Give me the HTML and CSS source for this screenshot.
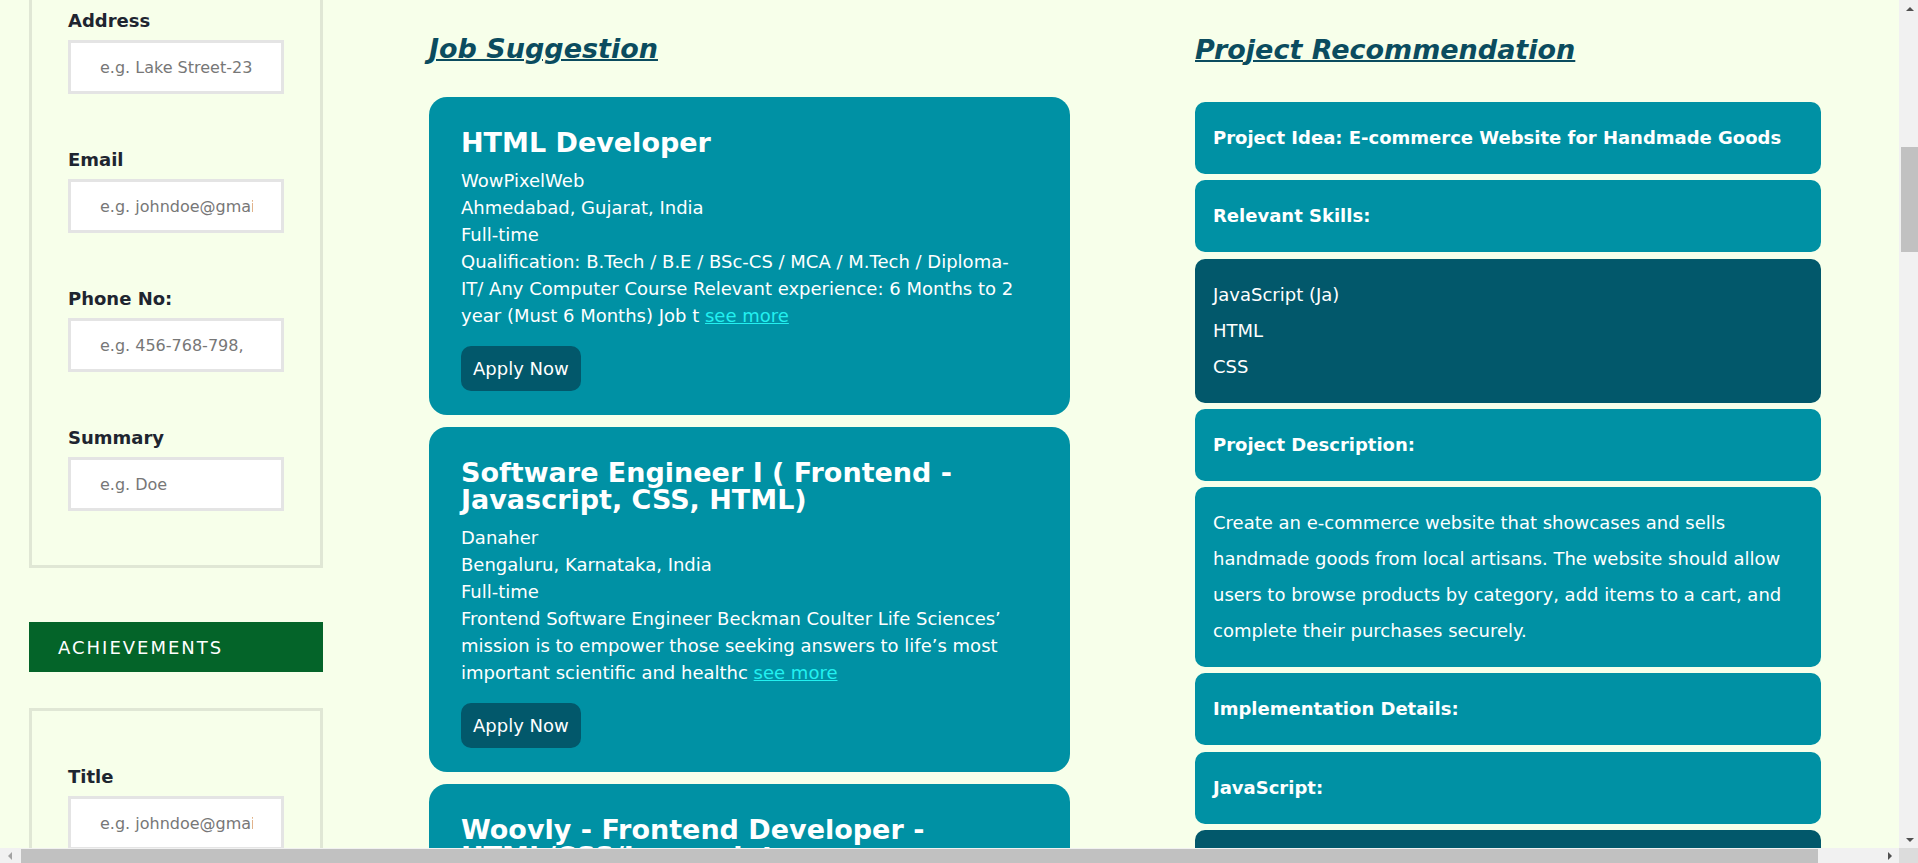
FILE: index.html
```html
<!DOCTYPE html>
<html lang="en">
<head>
<meta charset="utf-8">
<title>Resume Builder</title>
<link rel="stylesheet" href="styles.css">
</head>
<body>
<div class="page">
  <aside class="sidebar">
    <form class="form-box form-box--continued">
      <div class="field">
        <label class="field-label" for="address">Address</label>
        <input class="field-input" id="address" type="text" placeholder="e.g. Lake Street-23">
      </div>
      <div class="field">
        <label class="field-label" for="email">Email</label>
        <input class="field-input" id="email" type="text" placeholder="e.g. johndoe@gmail.com">
      </div>
      <div class="field">
        <label class="field-label" for="phone">Phone No:</label>
        <input class="field-input" id="phone" type="text" placeholder="e.g. 456-768-798,">
      </div>
      <div class="field">
        <label class="field-label" for="summary">Summary</label>
        <input class="field-input" id="summary" type="text" placeholder="e.g. Doe">
      </div>
    </form>
    <div class="section-head">ACHIEVEMENTS</div>
    <form class="form-box form-box--achieve">
      <div class="field">
        <label class="field-label" for="ach-title">Title</label>
        <input class="field-input" id="ach-title" type="text" placeholder="e.g. johndoe@gmail.com">
      </div>
    </form>
  </aside>

  <main class="jobs">
    <h2 class="col-title">Job Suggestion</h2>

    <article class="job-card">
      <h3 class="job-title">HTML Developer</h3>
      <p class="job-line">WowPixelWeb</p>
      <p class="job-line">Ahmedabad, Gujarat, India</p>
      <p class="job-line">Full-time</p>
      <p class="job-line">Qualification: B.Tech / B.E / BSc-CS / MCA / M.Tech / Diploma-IT/ Any Computer Course Relevant experience: 6 Months to 2 year (Must 6 Months) Job t <a class="see-more" href="#">see more</a></p>
      <button class="apply-btn" type="button">Apply Now</button>
    </article>

    <article class="job-card">
      <h3 class="job-title">Software Engineer I ( Frontend - Javascript, CSS, HTML)</h3>
      <p class="job-line">Danaher</p>
      <p class="job-line">Bengaluru, Karnataka, India</p>
      <p class="job-line">Full-time</p>
      <p class="job-line">Frontend Software Engineer Beckman Coulter Life Sciences’ mission is to empower those seeking answers to life’s most important scientific and healthc <a class="see-more" href="#">see more</a></p>
      <button class="apply-btn" type="button">Apply Now</button>
    </article>

    <article class="job-card">
      <h3 class="job-title">Woovly - Frontend Developer - HTML/CSS/Javascript</h3>
      <button class="apply-btn" type="button">Apply Now</button>
    </article>
  </main>

  <section class="projects">
    <h2 class="col-title col-title--projects">Project Recommendation</h2>
    <div class="p-block p-block--head">Project Idea: E-commerce Website for Handmade Goods</div>
    <div class="p-block p-block--head">Relevant Skills:</div>
    <ul class="p-block p-block--dark p-list">
      <li>JavaScript (Ja)</li>
      <li>HTML</li>
      <li>CSS</li>
    </ul>
    <div class="p-block p-block--head">Project Description:</div>
    <div class="p-block">Create an e-commerce website that showcases and sells handmade goods from local artisans. The website should allow users to browse products by category, add items to a cart, and complete their purchases securely.</div>
    <div class="p-block p-block--head">Implementation Details:</div>
    <div class="p-block p-block--head">JavaScript:</div>
    <div class="p-block p-block--dark p-block--tall"></div>
  </section>
</div>

<div class="sb sb-v" aria-hidden="true">
  <span class="sb-btn"><span class="tri tri-up"></span></span>
  <span class="sb-track-v"><span class="sb-thumb-v"></span></span>
  <span class="sb-btn"><span class="tri tri-down"></span></span>
</div>
<div class="sb sb-h" aria-hidden="true">
  <span class="sb-btn-h"><span class="tri tri-left"></span></span>
  <span class="sb-track-h"><span class="sb-thumb-h"></span></span>
  <span class="sb-btn-h"><span class="tri tri-right"></span></span>
</div>
<div class="sb-corner" aria-hidden="true"></div>
</body>
</html>
```

FILE: styles.css
```css
* {
  box-sizing: border-box;
}

html,
body {
  margin: 0;
  padding: 0;
}

body {
  background: #f7ffea;
  font-family: "DejaVu Sans", Verdana, sans-serif;
  color: #1e2530;
}

.page {
  display: flex;
  align-items: flex-start;
  width: 1970px;
}

/* ---------- left sidebar ---------- */
.sidebar {
  flex: none;
  width: 294px;
  margin-left: 29px;
}

.form-box {
  display: flex;
  flex-direction: column;
  gap: 55px;
  margin: 0;
  border: 3px solid #e0e7d5;
  padding: 55px 36px 54px;
}

.form-box--continued {
  border-top: 0;
  padding-top: 10px;
}

.form-box--achieve {
  margin-top: 36px;
}

.field {
  display: flex;
  flex-direction: column;
}

.field-label {
  margin-bottom: 9px;
  font-size: 18px;
  font-weight: bold;
  line-height: 21px;
  color: #1e2530;
}

.field-input {
  width: 216px;
  height: 54px;
  margin: 0;
  border: 3px solid #e4e4e4;
  border-radius: 0;
  padding: 0 28px 0 29px;
  background: #fff;
  font: 16px "DejaVu Sans", Verdana, sans-serif;
  color: #333;
  outline: none;
}

.field-input::placeholder {
  color: #777;
  opacity: 1;
}

.section-head {
  margin-top: 54px;
  height: 50px;
  padding: 14.5px 29px;
  background: #046429;
  color: #fff;
  font-size: 18px;
  line-height: 21px;
  letter-spacing: 2px;
}

/* ---------- column titles ---------- */
.col-title {
  margin: 0 0 32px;
  font-size: 27px;
  line-height: 32px;
  font-weight: bold;
  font-style: italic;
  color: #0b4c5f;
  text-decoration: underline;
  text-decoration-thickness: 2px;
}

.col-title--projects {
  margin-bottom: 36px;
}

/* ---------- job suggestions ---------- */
.jobs {
  flex: none;
  width: 641px;
  margin-left: 106px;
  padding-top: 33px;
}

.job-card {
  margin-bottom: 12px;
  border-radius: 18px;
  padding: 32px 44px 24px 32px;
  background: #0091a4;
  color: #fff;
  font-size: 18px;
  line-height: 27px;
}

.job-title {
  margin: 0 -12px 11px 0;
  font-size: 27px;
  line-height: 27px;
  font-weight: bold;
}

.job-line {
  margin: 0;
}

.see-more {
  color: #22f0f0;
}

.apply-btn {
  display: block;
  margin-top: 17px;
  border: 0;
  border-radius: 10px;
  padding: 9px 12px;
  background: #02586b;
  color: #fff;
  font: 18px/27px "DejaVu Sans", Verdana, sans-serif;
}

/* ---------- project recommendation ---------- */
.projects {
  flex: none;
  width: 626px;
  margin-left: 125px;
  padding-top: 34px;
}

.p-block {
  margin: 0 0 6.3px;
  border-radius: 10px;
  padding: 18px;
  background: #0091a4;
  color: #fff;
  font-size: 18px;
  line-height: 36px;
}

.p-block--head {
  font-weight: bold;
}

.p-block--dark {
  background: #02586b;
}

.p-list {
  list-style: none;
}

.p-block--tall {
  min-height: 144px;
}

/* ---------- window scrollbars (drawn over the page edge) ---------- */
.sb {
  position: fixed;
  display: flex;
  background: #f1f1f1;
  z-index: 10;
}

.sb-v {
  top: 0;
  right: 0;
  bottom: 15px;
  width: 19px;
  flex-direction: column;
}

.sb-h {
  left: 0;
  right: 19px;
  bottom: 0;
  height: 15px;
}

.sb-corner {
  position: fixed;
  right: 0;
  bottom: 0;
  width: 19px;
  height: 15px;
  background: #dcdcdc;
  z-index: 10;
}

.sb-btn {
  flex: none;
  display: flex;
  align-items: center;
  justify-content: center;
  height: 17px;
  padding-left: 2px;
}

.sb-btn-h {
  flex: none;
  display: flex;
  align-items: center;
  justify-content: center;
  width: 19px;
  padding-top: 1px;
}

.sb-track-v {
  flex: 1;
  padding: 130px 0 0 2px;
}

.sb-thumb-v {
  display: block;
  height: 105px;
  background: #c1c1c1;
}

.sb-track-h {
  flex: 1;
  display: flex;
  align-items: flex-end;
  padding: 0 62px 0 2px;
}

.sb-thumb-h {
  display: block;
  flex: 1;
  height: 14px;
  background: #c1c1c1;
}

.tri {
  display: block;
  width: 0;
  height: 0;
}

.tri-up {
  border-left: 4px solid transparent;
  border-right: 4px solid transparent;
  border-bottom: 4px solid #505050;
}

.tri-down {
  border-left: 4px solid transparent;
  border-right: 4px solid transparent;
  border-top: 4px solid #505050;
}

.tri-left {
  border-top: 4px solid transparent;
  border-bottom: 4px solid transparent;
  border-right: 4px solid #a3a3a3;
}

.tri-right {
  border-top: 4px solid transparent;
  border-bottom: 4px solid transparent;
  border-left: 4px solid #505050;
}
```
